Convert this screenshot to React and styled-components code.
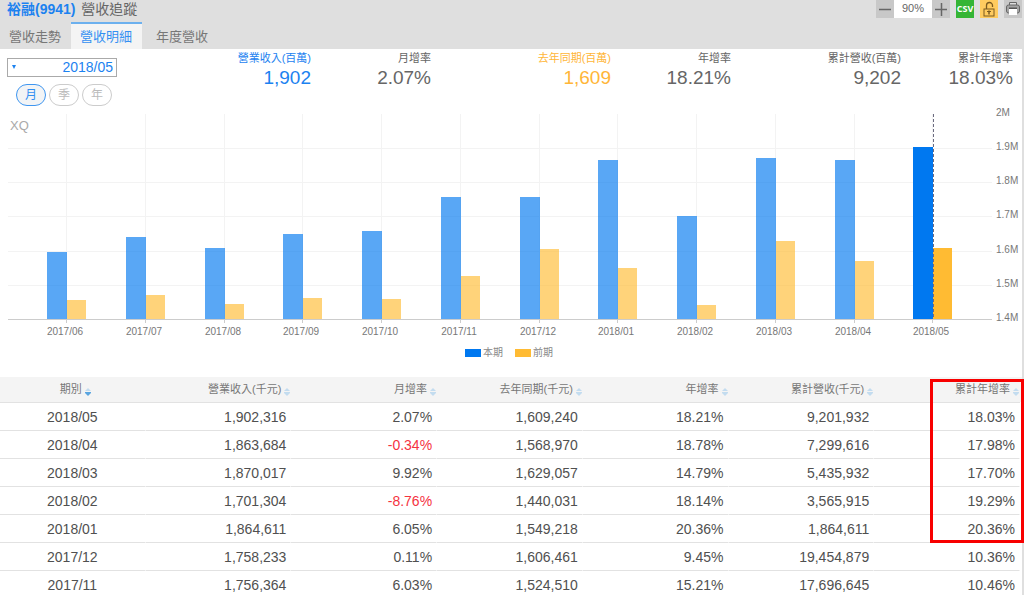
import React, { useState } from 'react';
import styled, { createGlobalStyle } from 'styled-components';

const GlobalStyle = createGlobalStyle`
  html {
    scrollbar-width: none;
  }
  body {
    margin: 0;
    background: #fff;
  }
  * {
    box-sizing: border-box;
  }
  body, button, select {
    font-family: "Liberation Sans", "Noto Sans CJK TC", sans-serif;
    font-weight: normal;
  }
`

const Page = styled.div`
  min-height: 100vh;
  border-right: 2px solid #dfdfdf;
  color: #666;
`

const Header = styled.header`
  background: #dfdfdf;
`

const TitleBar = styled.div`
  display: flex;
  justify-content: space-between;
  align-items: flex-start;
  height: 22px;
`

const Title = styled.h1`
  margin: 0;
  padding-left: 7px;
  font-size: 14px;
  line-height: 18px;
  font-weight: normal;
  color: #666;
`

const StockLink = styled.a`
  margin-right: 2px;
  color: #1c82f0;
  font-weight: bold;
  text-decoration: none;
`

const Toolbar = styled.div`
  display: flex;
  gap: 6px;
`

const Zoom = styled.div`
  display: flex;
  align-items: center;
`

const ZoomValue = styled.output`
  width: 38px;
  height: 18px;
  background: #fff;
  font-size: 11px;
  line-height: 16px;
  text-align: center;
`

const ToolButton = styled.button`
  display: flex;
  align-items: center;
  justify-content: center;
  width: 18px;
  height: 18px;
  padding: 0;
  border: 0;
  background: ${props => props.$bg || '#c8c8c8'};
  color: ${props => props.$color || '#666'};
  font-family: "Open Sans", sans-serif;
  font-size: 9px;
  line-height: 16px;
  font-weight: bold;
`

const Tabs = styled.nav`
  display: flex;
`

const Tab = styled.button`
  height: 27px;
  padding: 0 10px 0 9px;
  border: 0;
  border-top: 2px solid ${props => props.$active ? '#6cb0ee' : 'transparent'};
  background: ${props => props.$active ? '#f4f4f4' : 'transparent'};
  color: ${props => props.$active ? '#3390f2' : '#777'};
  font-size: 13px;
  line-height: 24px;

  &:last-child {
    padding-left: 14px;
  }
`

const Overview = styled.section`
  display: flex;
  align-items: flex-start;
  padding-right: 9px;
`

const Controls = styled.div`
  width: 131px;
  padding: 9px 0 0 7px;
`

const SelectBox = styled.div`
  position: relative;
  width: 110px;

  &::before {
    content: "";
    position: absolute;
    left: 5px;
    top: 7px;
    border: 2px solid transparent;
    border-top: 4px solid #1c82f0;
  }
`

const PeriodSelect = styled.select`
  display: block;
  appearance: none;
  width: 100%;
  height: 19px;
  padding: 0 3px;
  border: 1px solid #aaa;
  border-radius: 0;
  background: transparent;
  color: #1c82f0;
  font-size: 14px;
  line-height: 17px;
  text-align-last: right;
`

const Pills = styled.div`
  display: flex;
  gap: 3px;
  padding: 7px 0 0 9px;
`

const Pill = styled.button`
  width: 30px;
  height: 22px;
  padding: 0;
  border: 1px solid ${props => props.$active ? '#3f96f0' : '#ccc'};
  border-radius: 11px;
  background: ${props => props.$active ? '#f2f4f6' : '#fff'};
  color: ${props => props.$active ? '#3390f2' : '#bbb'};
  font-size: 12px;
  line-height: 18px;
`

const Summary = styled.dl`
  flex: 1;
  display: grid;
  grid-template-columns: 180fr 120fr 180fr 120fr 170fr 112fr;
  margin: 0;
  text-align: right;
`

const Stat = styled.div`
  color: ${props => props.$color || '#666'};
`

const StatLabel = styled.dt`
  font-size: 11px;
  line-height: 18px;
  white-space: nowrap;
`

const StatValue = styled.dd`
  margin: 0;
  font-size: 19px;
  line-height: 22px;
`

const ChartSvg = styled.svg`
  display: block;
  width: 100%;
  height: auto;

  text {
    font-size: 10px;
    fill: #777;
  }
  .logo {
    font-size: 13px;
    fill: #aaa;
  }
`

const Legend = styled.div`
  display: flex;
  justify-content: center;
  gap: 12px;
  padding: 1px 4px 15px 0;
  font-size: 10px;
  line-height: 18px;
  color: #888;
`

const LegendItem = styled.span`
  display: flex;
  align-items: center;
  gap: 2px;

  &::before {
    content: "";
    width: 16px;
    height: 8px;
    background: ${props => props.$color};
  }
`

const TableWrap = styled.section`
  position: relative;
  padding-right: 2px;
  background: linear-gradient(#f4f4f4, #f4f4f4) no-repeat 0 0 / 100% 25px;
`

const Table = styled.table`
  width: 100%;
  table-layout: fixed;
  border-collapse: separate;
  border-spacing: 0;
`

const Th = styled.th`
  height: 26px;
  padding: 0 1px 1px 0;
  border-bottom: 1px solid #e2e2e2;
  background: #f4f4f4;
  font-weight: normal;
  text-align: right;

  &:first-child {
    padding-left: 6px;
    text-align: center;
  }
`

const SortButton = styled.button`
  display: inline-flex;
  align-items: center;
  gap: 3px;
  padding: 0;
  border: 0;
  background: none;
  color: #777;
  font-size: 11px;
  line-height: 22px;
  white-space: nowrap;

  svg {
    margin-top: 5px;
  }
`

const Td = styled.td`
  height: 28px;
  padding: 0 4px 0 0;
  border-right: 1px solid #fff;
  border-bottom: 1px solid #e2e2e2;
  color: ${props => props.$negative ? '#f5333f' : '#505050'};
  font-size: 14px;
  line-height: 26px;
  text-align: right;

  &:first-child {
    padding: 0;
    text-align: center;
  }
`

// frame round the latest cumulative growth figures
const Highlight = styled.div`
  position: absolute;
  top: 2px;
  right: -2px;
  width: 94px;
  height: 164px;
  border: 3px solid #f80000;
  pointer-events: none;
`

const tabs = ['營收走勢', '營收明細', '年度營收'];

const stats = [
  { label: '營業收入(百萬)', value: '1,902', color: '#1c82f0' },
  { label: '月增率', value: '2.07%' },
  { label: '去年同期(百萬)', value: '1,609', color: '#ffb638' },
  { label: '年增率', value: '18.21%' },
  { label: '累計營收(百萬)', value: '9,202' },
  { label: '累計年增率', value: '18.03%' }
];

const months = [
  ['2017/06', 1.596, 1.457],
  ['2017/07', 1.640, 1.469],
  ['2017/08', 1.607, 1.444],
  ['2017/09', 1.648, 1.461],
  ['2017/10', 1.657, 1.458],
  ['2017/11', 1.756, 1.525],
  ['2017/12', 1.758, 1.606],
  ['2018/01', 1.865, 1.549],
  ['2018/02', 1.701, 1.440],
  ['2018/03', 1.870, 1.629],
  ['2018/04', 1.864, 1.569],
  ['2018/05', 1.902, 1.609]
];

const columns = ['期別', '營業收入(千元)', '月增率', '去年同期(千元)', '年增率', '累計營收(千元)', '累計年增率'];

const rows = [
  ['2018/05', '1,902,316', '2.07%', '1,609,240', '18.21%', '9,201,932', '18.03%'],
  ['2018/04', '1,863,684', '-0.34%', '1,568,970', '18.78%', '7,299,616', '17.98%'],
  ['2018/03', '1,870,017', '9.92%', '1,629,057', '14.79%', '5,435,932', '17.70%'],
  ['2018/02', '1,701,304', '-8.76%', '1,440,031', '18.14%', '3,565,915', '19.29%'],
  ['2018/01', '1,864,611', '6.05%', '1,549,218', '20.36%', '1,864,611', '20.36%'],
  ['2017/12', '1,758,233', '0.11%', '1,606,461', '9.45%', '19,454,879', '10.36%'],
  ['2017/11', '1,756,364', '6.03%', '1,524,510', '15.21%', '17,696,645', '10.46%']
];

const BASE = 213;
const barHeight = value => Math.round((value - 1.4) / 0.6 * 205);
const tickX = i => Math.round(67 + i * 78.75);

function Chart() {
  return (
    <ChartSvg viewBox="0 0 1022 237" role="img" aria-label="營收明細">
      <text className="logo" x="10" y="24">XQ</text>
      {[1.5, 1.6, 1.7, 1.8, 1.9].map(v => (
        <rect key={v} x="8" y={BASE - barHeight(v)} width="984" height="1" fill="#f3f3f3" />
      ))}
      {months.map(([month], i) => (
        <rect key={month} x={tickX(i) - 1} y="8" width="1" height="205" fill="#f3f3f3" />
      ))}
      {months.map(([month, current, previous], i) => {
        const x = tickX(i);
        const last = i === months.length - 1;
        return (
          <g key={month}>
            <rect x={x - 20} y={BASE - barHeight(current)} width="20" height={barHeight(current)} fill="#0078f0" opacity={last ? 1 : 0.65} />
            <rect x={x} y={BASE - barHeight(previous)} width="19" height={barHeight(previous)} fill="#ffbb33" opacity={last ? 1 : 0.65} />
            <rect x={x - 1} y={BASE} width="1" height="4" fill="#ccc" />
            <text x={x - 2} y="229" textAnchor="middle">{month}</text>
          </g>
        );
      })}
      <rect x="8" y={BASE} width="984" height="1" fill="#ccc" />
      <line x1="933.5" x2="933.5" y1="8" y2={BASE} stroke="#6b6b80" strokeDasharray="3 2" />
      {['1.4M', '1.5M', '1.6M', '1.7M', '1.8M', '1.9M', '2M'].map((label, i) => (
        <text key={label} x="996" y={215 - Math.round(i * 34.2)}>{label}</text>
      ))}
    </ChartSvg>
  );
}

function SortIcon({ down }) {
  return (
    <svg width="6" height="8" viewBox="0 0 6 8" aria-hidden="true">
      <path d="M3 0L6 3H0Z" fill="#c3dcef" />
      <path d="M0 4H6V5L3 8L0 5Z" fill={down ? '#5aa5e0' : '#c3dcef'} />
    </svg>
  );
}

function LockIcon() {
  return (
    <svg width="18" height="18" viewBox="0 0 18 18" fill="none" stroke="#7a5a20">
      <path d="M6.500 9V5.500A3 3 0 0 1 12.500 5.500V7" strokeWidth="1.300" />
      <rect x="4" y="9" width="10" height="7" />
      <path d="M9 10.500V14.500" strokeWidth="1.500" />
      <path d="M7 11.500H11" />
    </svg>
  );
}

function PrinterIcon() {
  return (
    <svg width="18" height="18" viewBox="0 0 18 18">
      <path d="M5.500 5V2.500H12.500V5" fill="#ddd" stroke="#666" />
      <rect x="2.500" y="5" width="13" height="8" rx="2" fill="#a4a4a4" stroke="#666" />
      <path d="M5 8.500H13" stroke="#555" strokeWidth="2" />
      <rect x="5" y="9" width="8" height="6" fill="#fff" />
    </svg>
  );
}

function App() {
  const [tab, setTab] = useState('營收明細');
  const [unit, setUnit] = useState('月');
  const [period, setPeriod] = useState('2018/05');
  const [zoom, setZoom] = useState(90);

  return (
    <Page>
      <GlobalStyle />
      <Header>
        <TitleBar>
          <Title><StockLink href="#stock">裕融(9941)</StockLink> 營收追蹤</Title>
          <Toolbar>
            <Zoom>
              <ToolButton aria-label="縮小" onClick={() => setZoom(zoom - 10)}>
                <svg width="14" height="14"><path d="M1 7.500H13" stroke="#666" strokeWidth="1.500" /></svg>
              </ToolButton>
              <ZoomValue>{zoom}%</ZoomValue>
              <ToolButton aria-label="放大" onClick={() => setZoom(zoom + 10)}>
                <svg width="14" height="14"><path d="M1 7.500H13M7.500 1V14" stroke="#666" strokeWidth="1.500" /></svg>
              </ToolButton>
            </Zoom>
            <ToolButton $bg="#35b535" $color="#fff">CSV</ToolButton>
            <ToolButton $bg="#ffcb5f" aria-label="鎖定"><LockIcon /></ToolButton>
            <ToolButton aria-label="列印"><PrinterIcon /></ToolButton>
          </Toolbar>
        </TitleBar>
        <Tabs>
          {tabs.map(name => (
            <Tab key={name} $active={name === tab} onClick={() => setTab(name)}>{name}</Tab>
          ))}
        </Tabs>
      </Header>

      <Overview>
        <Controls>
          <SelectBox>
            <PeriodSelect aria-label="期別" value={period} onChange={e => setPeriod(e.target.value)}>
              {rows.map(row => <option key={row[0]}>{row[0]}</option>)}
            </PeriodSelect>
          </SelectBox>
          <Pills>
            {['月', '季', '年'].map(name => (
              <Pill key={name} $active={name === unit} onClick={() => setUnit(name)}>{name}</Pill>
            ))}
          </Pills>
        </Controls>
        <Summary>
          {stats.map(stat => (
            <Stat key={stat.label} $color={stat.color}>
              <StatLabel>{stat.label}</StatLabel>
              <StatValue>{stat.value}</StatValue>
            </Stat>
          ))}
        </Summary>
      </Overview>

      <Chart />
      <Legend>
        <LegendItem $color="#0078f0">本期</LegendItem>
        <LegendItem $color="#ffbb33">前期</LegendItem>
      </Legend>

      <TableWrap>
        <Table>
          <thead>
            <tr>
              {columns.map((name, i) => (
                <Th key={name} scope="col">
                  <SortButton>{name}<SortIcon down={i === 0} /></SortButton>
                </Th>
              ))}
            </tr>
          </thead>
          <tbody>
            {rows.map(row => (
              <tr key={row[0]}>
                {row.map((cell, i) => (
                  <Td key={i} $negative={cell.startsWith('-')}>{cell}</Td>
                ))}
              </tr>
            ))}
          </tbody>
        </Table>
        <Highlight />
      </TableWrap>
    </Page>
  );
}

export default App;
